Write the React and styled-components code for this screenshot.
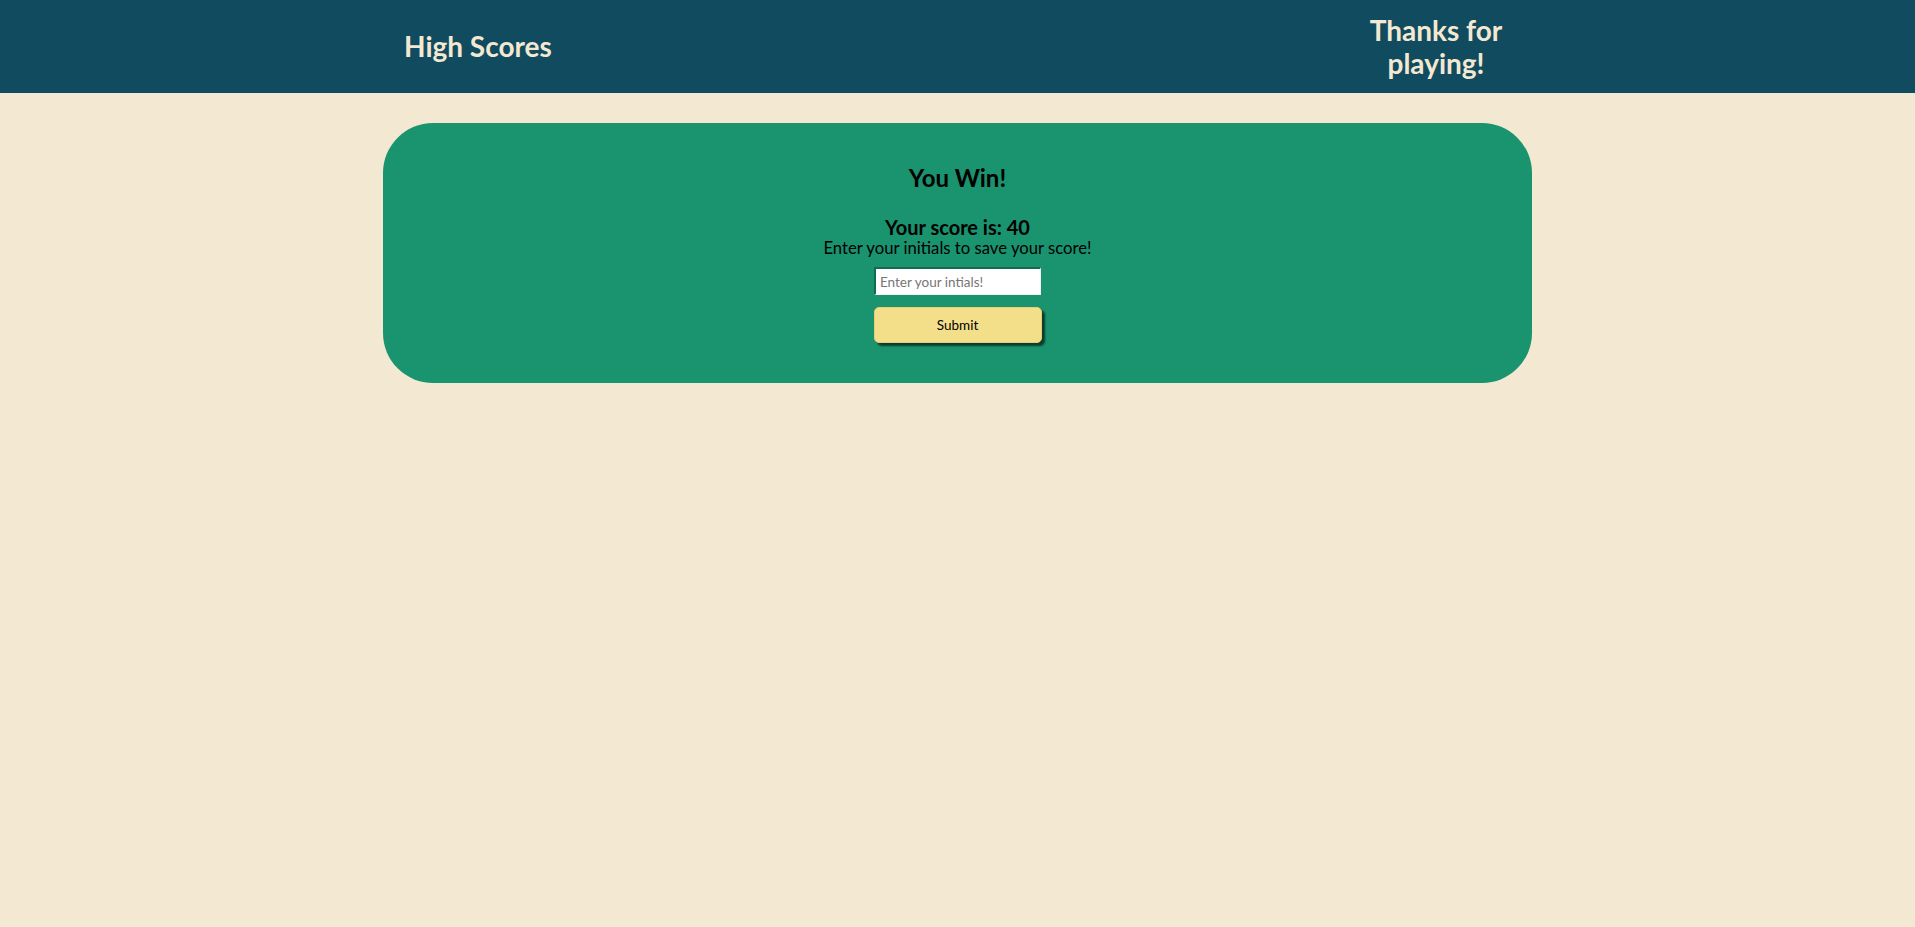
import React from "react";
import styled, { createGlobalStyle } from "styled-components";

const GlobalStyle = createGlobalStyle`
  html, body {
    margin: 0;
    padding: 0;
    background: #f3e9d2;
    font-family: "Lato", "Noto Sans", sans-serif;
  }
`;

const Header = styled.header`
  background: #114b5f;
  height: 93px;
  color: #f3e9d2;
`;

const HeaderInner = styled.div`
  width: 60%;
  height: 100%;
  margin: 0 auto;
  padding: 0 20px 0 21px;
  box-sizing: border-box;
  display: flex;
  align-items: center;
  justify-content: space-between;
`;

const HeaderTitle = styled.h1`
  margin: 0;
  font-size: 28px;
  font-weight: 700;
  line-height: 33px;
`;

const HeaderNote = styled.p`
  margin: 0;
  width: 152px;
  text-align: center;
  font-size: 28px;
  font-weight: 700;
  line-height: 33px;
`;

const Main = styled.main`
  padding-top: 30px;
`;

const Card = styled.section`
  width: 60%;
  height: 260px;
  margin: 0 auto;
  box-sizing: border-box;
  background: #1a936f;
  border-radius: 50px;
  padding: 41px 20px 0;
  display: flex;
  flex-direction: column;
  align-items: center;
  color: #000;
`;

const Title = styled.h2`
  margin: 0 0 24px;
  font-size: 24px;
  font-weight: 700;
  line-height: 28px;
`;

const Score = styled.h3`
  margin: 0;
  font-size: 20px;
  font-weight: 700;
  line-height: 23px;
`;

const Hint = styled.p`
  margin: 0 0 9px;
  font-size: 16.7px;
  line-height: 19px;
`;

const Form = styled.form`
  display: flex;
  flex-direction: column;
  align-items: center;
  gap: 12px;
`;

const Input = styled.input`
  width: 167px;
  height: 28px;
  box-sizing: border-box;
  border-style: solid;
  border-width: 2px 1px 1px 2px;
  border-color: #126a4f #f0f0f0 #f0f0f0 #126a4f;
  background: #fff;
  padding: 2px 4px;
  font-family: inherit;
  font-size: 13.5px;
  outline: none;
  &::placeholder {
    color: #767676;
  }
`;

const SubmitButton = styled.button`
  width: 168px;
  height: 36px;
  border: 1px solid #e6cf72;
  border-radius: 5px;
  background: #f3de8a;
  box-shadow: 3px 3px 2px #0b3d2d;
  font-family: inherit;
  font-size: 13.5px;
  color: #000;
  cursor: pointer;
`;

export default function App() {
  return (
    <>
      <GlobalStyle />
      <Header>
        <HeaderInner>
          <HeaderTitle>High Scores</HeaderTitle>
          <HeaderNote>Thanks for playing!</HeaderNote>
        </HeaderInner>
      </Header>
      <Main>
        <Card>
          <Title>You Win!</Title>
          <Score>Your score is: 40</Score>
          <Hint>Enter your initials to save your score!</Hint>
          <Form onSubmit={(e) => e.preventDefault()}>
            <Input type="text" placeholder="Enter your intials!" />
            <SubmitButton type="submit">Submit</SubmitButton>
          </Form>
        </Card>
      </Main>
    </>
  );
}
